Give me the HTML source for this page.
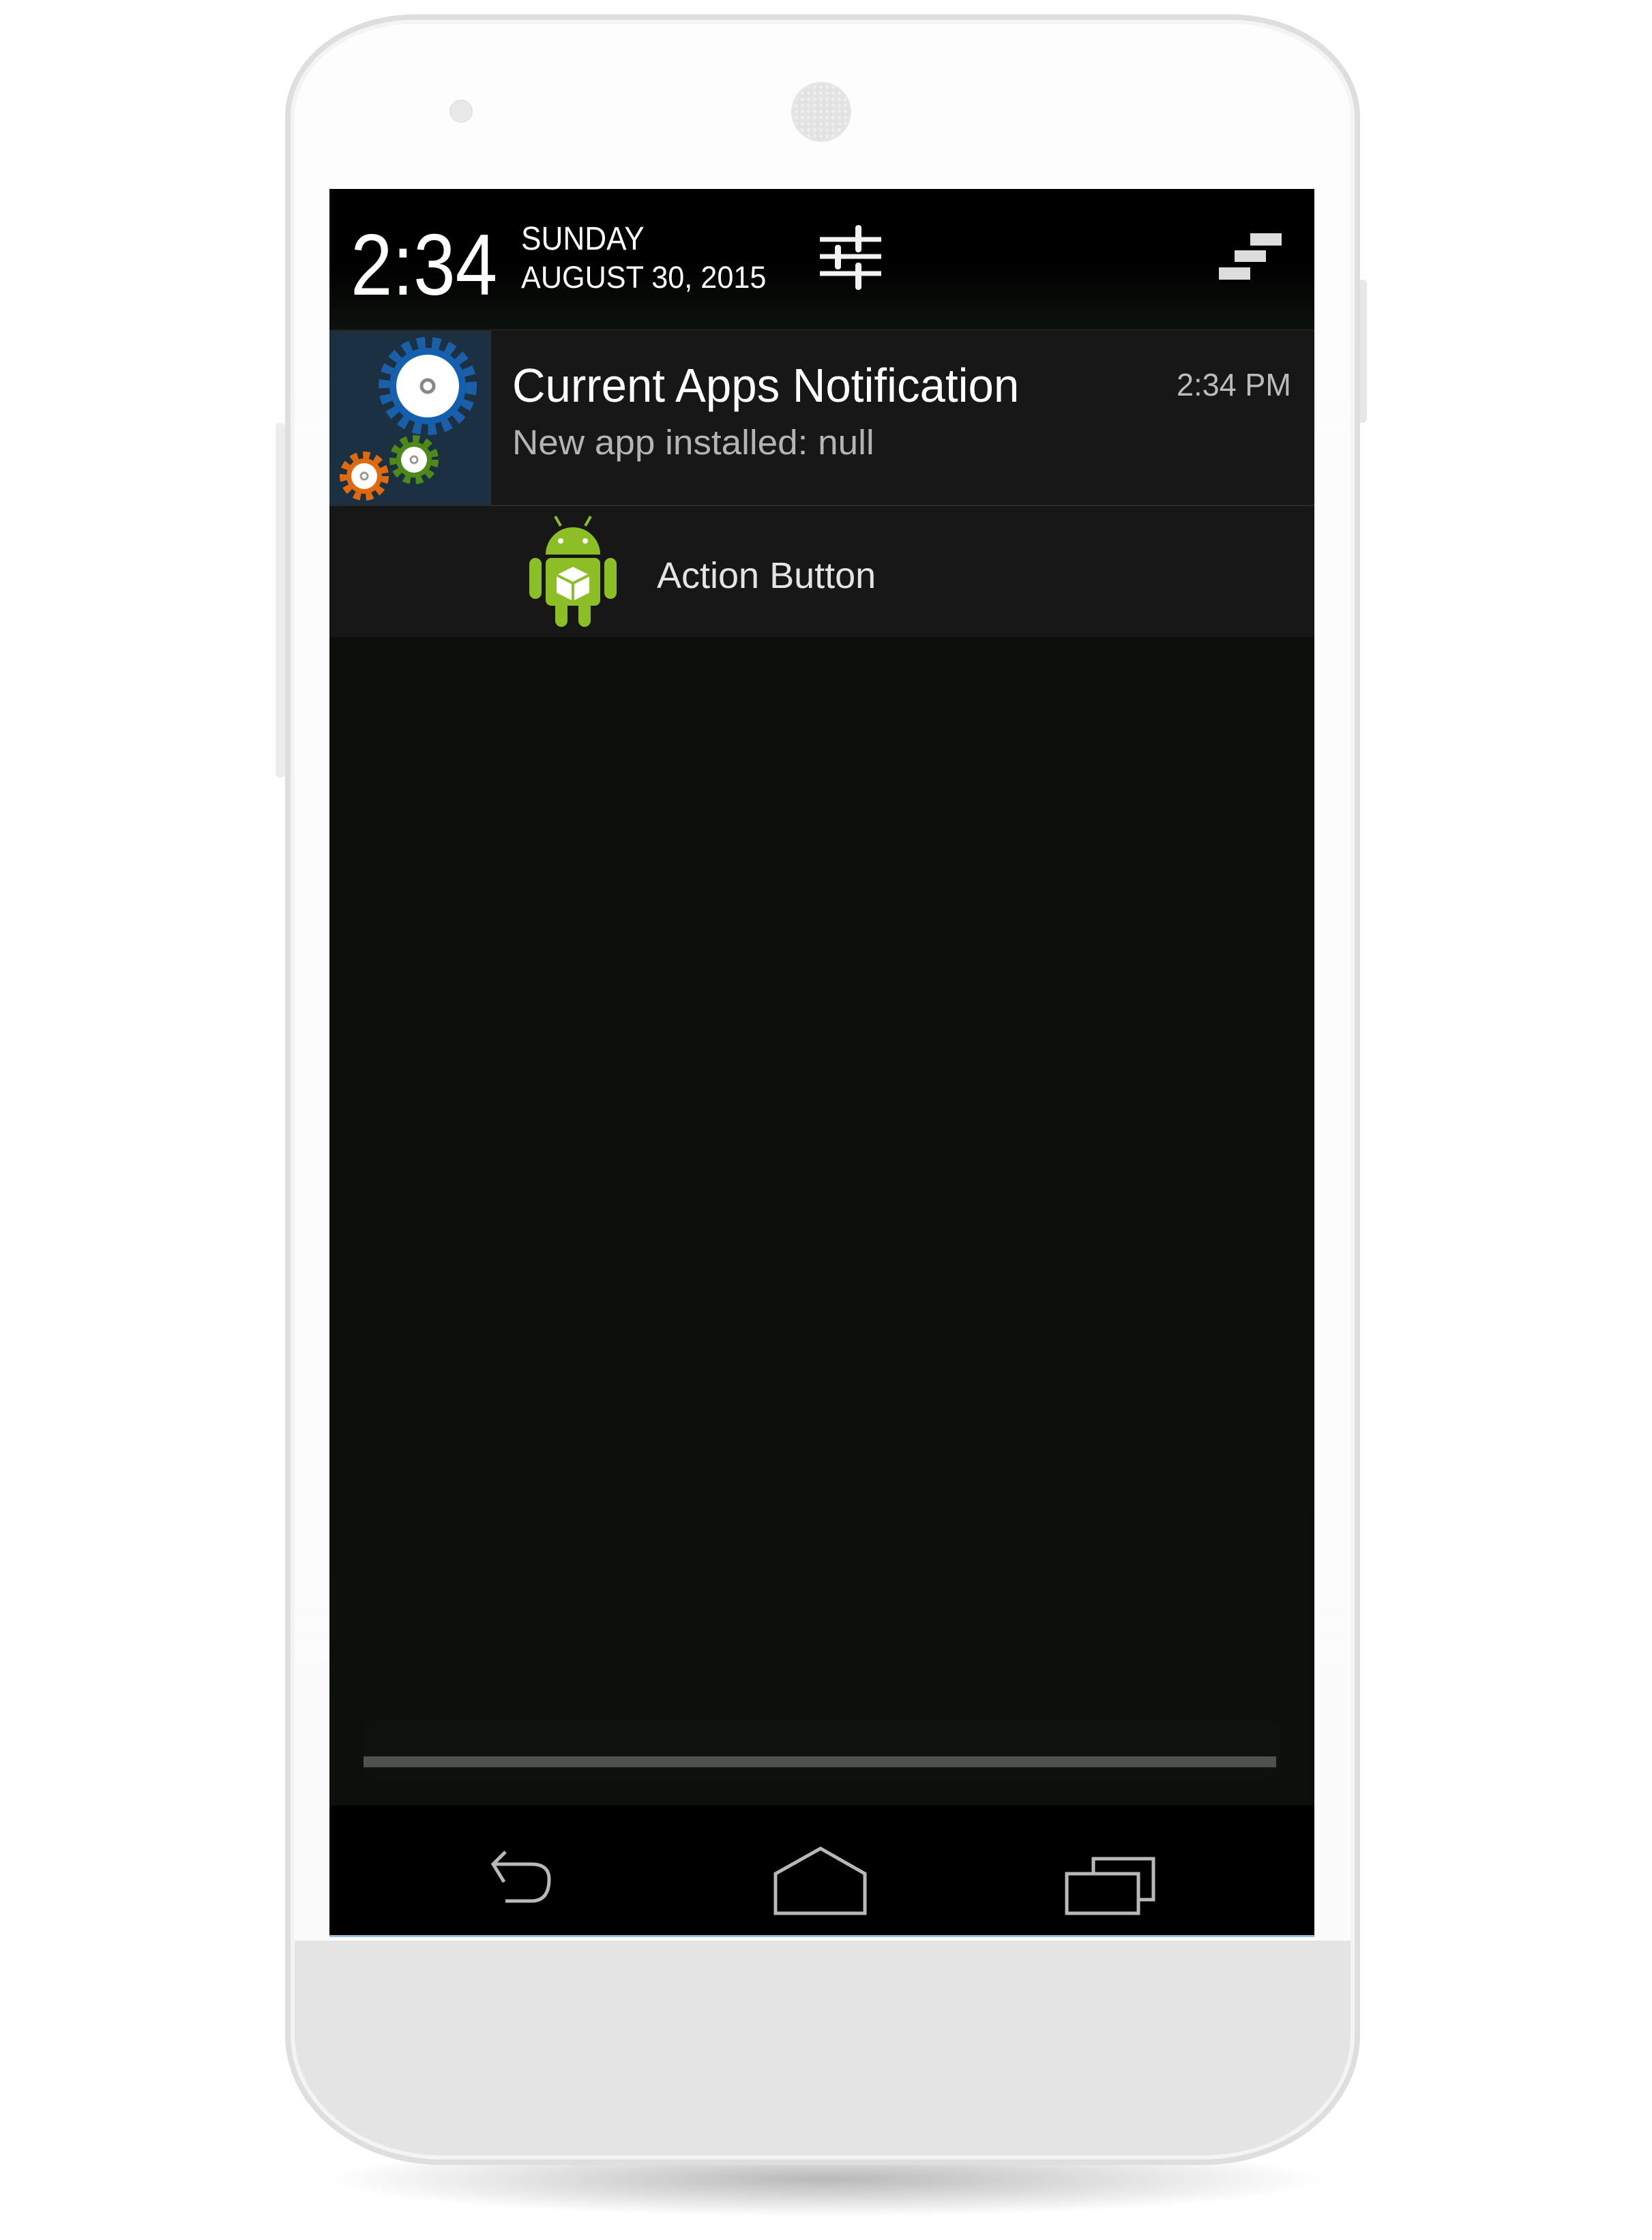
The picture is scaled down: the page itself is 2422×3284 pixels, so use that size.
<!DOCTYPE html>
<html><head><meta charset="utf-8"><style>
*{margin:0;padding:0;box-sizing:border-box}
body{width:2422px;height:3284px;background:#fff;position:relative;overflow:hidden;font-family:"Liberation Sans",sans-serif}
.a{position:absolute}
.t{position:absolute;white-space:nowrap;transform-origin:left top;line-height:1}
</style></head><body>
<div class="a" style="left:470px;top:3140px;width:1480px;height:110px;border-radius:50%;background:radial-gradient(ellipse at center,rgba(0,0,0,.28),rgba(0,0,0,0) 70%)"></div>
<div class="a" style="left:1990px;top:410px;width:14px;height:210px;background:#e8e8e8;border-radius:6px"></div>
<div class="a" style="left:404px;top:620px;width:14px;height:520px;background:#ececec;border-radius:6px"></div>
<div class="a" style="left:418px;top:21px;width:1576px;height:3153px;border-radius:190px 190px 230px 230px/150px 150px 190px 190px;background:linear-gradient(#fdfdfd 0,#fbfbfb 2816px,#e4e4e4 2816px,#e4e4e4 100%);border:8px solid #dedede;box-shadow:inset 0 0 0 6px #f4f4f4"></div>
<div class="a" style="left:659px;top:146px;width:34px;height:34px;border-radius:50%;background:#e9e9e9;border:2px solid #e2e2e2"></div>
<div class="a" style="left:1160px;top:120px;width:88px;height:88px;border-radius:50%;background:radial-gradient(#eee 2px,#e2e2e2 3px);background-size:9px 9px;border:3px solid #e6e6e6"></div>
<div class="a" style="left:483px;top:277px;width:1444px;height:2561px;background:#0b100b;overflow:hidden">
 <div class="a" style="left:0;top:0;width:1444px;height:206px;background:linear-gradient(#000 0,#000 110px,#0d120d 206px)"></div>
 <div class="t" style="left:31px;top:48px;font-size:127px;color:#fff;transform:scaleX(.87)">2:34</div>
 <div class="t" style="left:281px;top:50px;font-size:48px;color:#fff;transform:scaleX(.92)">SUNDAY</div>
 <div class="t" style="left:281px;top:107px;font-size:45px;color:#fff;transform:scaleX(.96)">AUGUST 30, 2015</div>
 <svg class="a" style="left:717px;top:48px" width="94" height="102" viewBox="0 0 94 102">
  <g stroke="#f2f2f2" stroke-width="7">
   <line x1="2" y1="26" x2="92" y2="26"/><line x1="2" y1="51" x2="92" y2="51"/><line x1="2" y1="76" x2="92" y2="76"/>
  </g>
  <g fill="#f2f2f2"><rect x="54" y="5" width="9" height="40" rx="4"/><rect x="24" y="34" width="9" height="36" rx="4"/><rect x="54" y="60" width="9" height="40" rx="4"/></g>
 </svg>
 <svg class="a" style="left:1304px;top:65px" width="94" height="68" viewBox="0 0 94 68">
  <g fill="#ddd"><rect x="46" y="0" width="46" height="18"/><rect x="23" y="25" width="46" height="17"/><rect x="0" y="50" width="46" height="18"/></g>
 </svg>
 <div class="a" style="left:0;top:206px;width:1444px;height:257px;background:#171717;border-top:2px solid #222"></div>
 <div class="a" style="left:0;top:208px;width:237px;height:255px;background:#1b3142"></div>
 <svg class="a" style="left:0;top:208px" width="237" height="255" viewBox="0 0 237 255">
  <circle cx="144" cy="81" r="64" fill="none" stroke="#1a5fa8" stroke-width="16" stroke-dasharray="12 10"/>
  <circle cx="144" cy="81" r="56" fill="#1460b0"/>
  <circle cx="144" cy="81" r="46" fill="#fff"/>
  <circle cx="144" cy="81" r="9" fill="none" stroke="#888" stroke-width="5"/>
  <circle cx="51" cy="213" r="31" fill="none" stroke="#e06a10" stroke-width="10" stroke-dasharray="10 8"/>
  <circle cx="51" cy="213" r="26" fill="#e06a10"/><circle cx="51" cy="213" r="19" fill="#fff"/>
  <circle cx="51" cy="213" r="5" fill="none" stroke="#999" stroke-width="3"/>
  <circle cx="124" cy="189" r="31" fill="none" stroke="#4d8a1a" stroke-width="10" stroke-dasharray="10 8"/>
  <circle cx="124" cy="189" r="26" fill="#4d8a1a"/><circle cx="124" cy="189" r="19" fill="#fff"/>
  <circle cx="124" cy="189" r="5" fill="none" stroke="#999" stroke-width="3"/>
 </svg>
 <div class="t" style="left:268px;top:253px;font-size:70px;color:#fff;transform:scaleX(.96)">Current Apps Notification</div>
 <div class="t" style="left:268px;top:346px;font-size:51px;color:#b4b4b4;transform:scaleX(1.04)">New app installed: null</div>
 <div class="t" style="left:1242px;top:264px;font-size:46px;color:#bbb;transform:scaleX(.98)">2:34 PM</div>
 <div class="a" style="left:0;top:463px;width:1444px;height:194px;background:#171717;border-top:2px solid #2a2a2a"></div>
 <svg class="a" style="left:291px;top:478px" width="132" height="166" viewBox="0 0 132 166">
  <g fill="#8cbf26">
   <line x1="40" y1="2" x2="48" y2="16" stroke="#8cbf26" stroke-width="4"/><line x1="92" y1="2" x2="84" y2="16" stroke="#8cbf26" stroke-width="4"/>
   <path d="M26 58 A40 40 0 0 1 106 58 Z"/>
   <rect x="26" y="63" width="80" height="70" rx="8"/>
   <rect x="2" y="63" width="18" height="60" rx="9"/><rect x="112" y="63" width="18" height="60" rx="9"/>
   <rect x="40" y="120" width="18" height="44" rx="9"/><rect x="74" y="120" width="18" height="44" rx="9"/>
  </g>
  <circle cx="48" cy="38" r="4" fill="#fff"/><circle cx="84" cy="38" r="4" fill="#fff"/>
  <path d="M66 76 L90 88 L90 114 L66 126 L42 114 L42 88 Z" fill="#fff"/>
  <path d="M42 88 L66 100 L90 88 M66 100 L66 126" stroke="#8cbf26" stroke-width="4" fill="none"/>
 </svg>
 <div class="t" style="left:480px;top:540px;font-size:54px;color:#e4e4e4;transform:scaleX(1.0)">Action Button</div>
 <div class="a" style="left:50px;top:2244px;width:1344px;height:86px;border-radius:20px;background:#0e120e"></div>
 <div class="a" style="left:50px;top:2298px;width:1338px;height:16px;background:#4d524b"></div>
 <div class="a" style="left:0;top:2370px;width:1444px;height:191px;background:#000"></div>
 <svg class="a" style="left:0;top:2370px" width="1444" height="191" viewBox="0 0 1444 191">
  <g fill="none" stroke="#b8b8b8" stroke-width="5">
   <path d="M258 68 L240 86 L256 112 M240 86 L296 86 Q322 86 322 108 Q322 140 296 140 L258 140"/>
   <path d="M654 158 L654 100 L720 63 L785 100 L785 158 Z"/>
   <rect x="1081" y="100" width="105" height="58"/>
   <path d="M1120 100 L1120 78 L1208 78 L1208 138 L1186 138"/>
  </g>
 </svg>
</div>
<div class="a" style="left:483px;top:2837px;width:1444px;height:3px;background:#9cc0e0"></div>
</body></html>
